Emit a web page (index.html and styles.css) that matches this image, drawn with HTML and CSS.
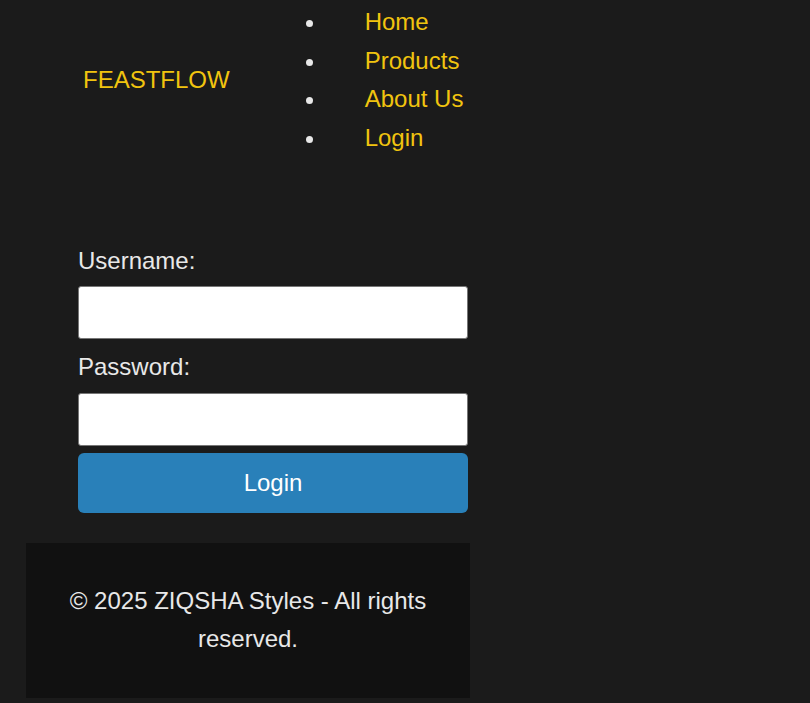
FILE: index.html
```html
<!DOCTYPE html>
<html lang="en">
<head>
<meta charset="utf-8">
<title>FeastFlow - Login</title>
<link rel="stylesheet" href="styles.css">
</head>
<body>
<div class="page">
  <header class="site-header">
    <div class="logo">FEASTFLOW</div>
    <nav class="nav">
      <ul class="nav-list">
        <li class="nav-item"><a href="#" class="nav-link">Home</a></li>
        <li class="nav-item"><a href="#" class="nav-link">Products</a></li>
        <li class="nav-item"><a href="#" class="nav-link">About Us</a></li>
        <li class="nav-item"><a href="#" class="nav-link">Login</a></li>
      </ul>
    </nav>
  </header>
  <main class="main">
    <form class="login-form">
      <div class="field">
        <label class="field-label" for="username">Username:</label>
        <input class="field-input" type="text" id="username">
      </div>
      <div class="field">
        <label class="field-label" for="password">Password:</label>
        <input class="field-input" type="password" id="password">
      </div>
      <button class="login-btn" type="button">Login</button>
    </form>
  </main>
  <footer class="site-footer">
    <p class="footer-text">© 2025 ZIQSHA Styles - All rights reserved.</p>
  </footer>
</div>
</body>
</html>
```
FILE: styles.css
```css
html, body {
  margin: 0;
  padding: 0;
  background: #1b1b1b;
}
body {
  font-family: "Liberation Sans", Arial, sans-serif;
  font-size: 24px;
  color: #e8e8e8;
}
.page {
  width: 444px;
  margin-left: 26px;
  padding-bottom: 5px;
}
.site-header {
  display: flex;
  align-items: center;
  padding: 3px 0 0 57px;
}
.logo {
  color: #f1c40f;
  line-height: 27.6px;
}
.nav-list {
  margin: 0 0 0 73px;
  padding: 0 0 0 24px;
  list-style: disc;
  color: #e8e8e8;
}
.nav-item {
  padding: 5.4px 0;
  line-height: 27.6px;
}
.nav-link {
  color: #f1c40f;
  text-decoration: none;
  padding-left: 38px;
}
.main {
  padding: 90px 0 0 52px;
}
.login-form {
  width: 390px;
  display: flex;
  flex-direction: column;
}
.field {
  display: flex;
  flex-direction: column;
  margin-bottom: 14px;
}
.field:last-of-type {
  margin-bottom: 7px;
}
.field-label {
  line-height: 27.6px;
}
.field-input {
  margin: 12px 0 0;
  height: 53px;
  box-sizing: border-box;
  border: 1px solid #767676;
  border-radius: 3px;
  background: #fff;
  font-size: 24px;
  padding: 0 10px;
}
.login-btn {
  height: 60px;
  border: none;
  border-radius: 6px;
  background: #2980b9;
  color: #fff;
  font-family: "Liberation Sans", Arial, sans-serif;
  font-size: 24px;
  cursor: pointer;
}
.site-footer {
  margin-top: 30px;
  background: #111;
  padding: 39px 30px 40px;
  text-align: center;
}
.footer-text {
  margin: 0;
  line-height: 38px;
  color: #e8e8e8;
}
```
